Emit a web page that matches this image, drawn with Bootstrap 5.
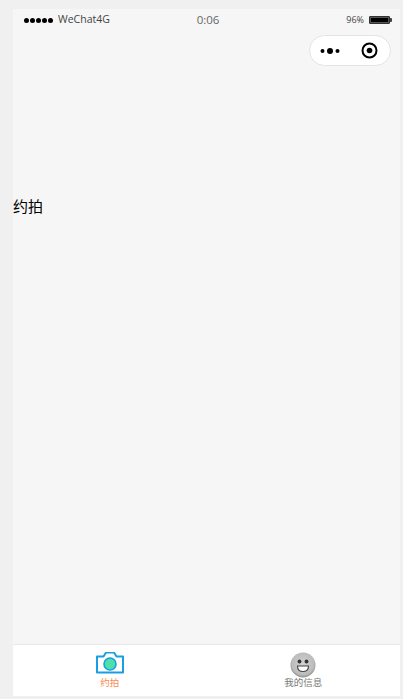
<!DOCTYPE html>
<html lang="zh-CN">
<head>
    <meta charset="UTF-8">
    <meta name="viewport" content="width=device-width, initial-scale=1.0">
    <title>约拍</title>
    <link href="https://cdn.jsdelivr.net/npm/bootstrap@5.3.0/dist/css/bootstrap.min.css" rel="stylesheet">
    <style>
        html, body { height: 100%; }
        body { background: #f0f0f0; padding: 9px 3px 3px 13px; font-family: "Open Sans", "Noto Sans CJK SC", sans-serif; overflow: hidden; }
        .phone-frame { height: 100%; background: #f6f6f6; }
        .status-row { height: 22px; padding: 0 8px 0 11px; font-size: 10.5px; color: #444; }
        .signal-dots { font-size: 0; }
        .signal-dots i { display: inline-block; width: 5px; height: 5px; margin-right: 1px; border-radius: 50%; background: #000; }
        .status-left, .status-right { flex: 1 1 0; }
        .status-time { font-size: 11.5px; color: #666; }
        .batt-pct { font-size: 9px; margin-right: 5px; }
        .batt-body { width: 21px; height: 8px; border: 1px solid #333; background: #000; box-shadow: inset 0 0 0 1px #555; border-radius: 1px; }
        .batt-tip { width: 2px; height: 4px; background: #444; border-radius: 0 1px 1px 0; }
        .capsule-row { padding: 4px 9px 0 0; }
        .wx-capsule { width: 82px; height: 31px; border: 1px solid #e4e4e4; border-radius: 16px; background: #fff; padding: 0 12px 0 10px; }
        .page-title { margin-top: 129px; font-size: 15px; line-height: 22px; color: #000; font-family: "Noto Sans CJK SC", sans-serif; }
        .tab-strip { height: 52px; background: #fff; border-top: 1px solid #e8e8e8; }
        .tab-cell { width: 50%; padding-top: 7px; font-size: 9.5px; line-height: 12px; font-family: "Noto Sans CJK SC", sans-serif; }
        .tab-active { color: #f78a55; }
        .tab-plain { color: #777; }
        .tab-icon { display: block; height: 26px; margin-bottom: -2px; }
    </style>
</head>
<body>

<div class="phone-frame d-flex flex-column">
    <!-- Status bar -->
    <div class="status-row d-flex align-items-center">
        <div class="status-left d-flex align-items-center gap-1">
            <span class="signal-dots"><i></i><i></i><i></i><i></i><i></i></span>
            <span>WeChat4G</span>
        </div>
        <div class="status-time">0:06</div>
        <div class="status-right d-flex align-items-center justify-content-end">
            <span class="batt-pct">96%</span>
            <span class="batt-body"></span><span class="batt-tip"></span>
        </div>
    </div>

    <!-- Capsule -->
    <div class="capsule-row d-flex justify-content-end">
        <div class="wx-capsule d-flex align-items-center justify-content-between">
            <svg width="20" height="8" viewBox="0 0 20 8"><circle cx="2.500" cy="4" r="2" fill="#000"/><circle cx="10" cy="4" r="3" fill="#000"/><circle cx="17.500" cy="4" r="2" fill="#000"/></svg>
            <svg width="17" height="17" viewBox="0 0 17 17"><circle cx="8.5" cy="8.5" r="7" fill="none" stroke="#000" stroke-width="2"/><circle cx="8.5" cy="8.5" r="2.8" fill="#000"/></svg>
        </div>
    </div>

    <!-- Content -->
    <div class="page-title flex-grow-1">约拍</div>

    <!-- Tab bar -->
    <div class="tab-strip d-flex">
        <div class="tab-cell tab-active d-flex flex-column align-items-center">
            <svg class="tab-icon" width="30" height="26" viewBox="0 0 30 26">
                <path d="M2 4.500h6.500l2.500-4h8l2.500 4H28v16H2z" fill="#fff" stroke="#1b9ee0" stroke-width="2" stroke-linejoin="round"/>
                <circle cx="15" cy="12" r="6" fill="#4fe0a8" stroke="#1b9ee0" stroke-width="1.6"/>
            </svg>
            <span>约拍</span>
        </div>
        <div class="tab-cell tab-plain d-flex flex-column align-items-center">
            <svg class="tab-icon" width="26" height="26" viewBox="0 0 26 26">
                <defs>
                    <radialGradient id="faceFill" cx="50%" cy="45%" r="55%">
                        <stop offset="0" stop-color="#d2d2d2"/>
                        <stop offset="0.8" stop-color="#bcbcbc"/>
                        <stop offset="1" stop-color="#8e8e8e"/>
                    </radialGradient>
                </defs>
                <circle cx="13" cy="13" r="12.5" fill="url(#faceFill)"/>
                <circle cx="9.500" cy="9.500" r="1.900" fill="#333"/>
                <circle cx="16.500" cy="9.500" r="1.900" fill="#333"/>
                <path d="M7.500 14h11c0 3.600-2.400 5.500-5.500 5.500S7.500 17.600 7.500 14z" fill="#fff" stroke="#444" stroke-width="1.100"/>
            </svg>
            <span>我的信息</span>
        </div>
    </div>
</div>

</body>
</html>
